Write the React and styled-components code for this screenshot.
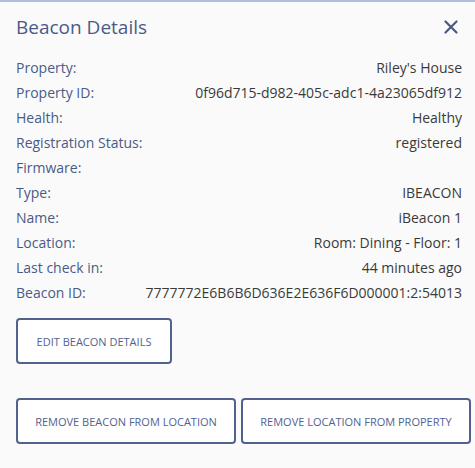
import React from 'react';
import styled, { createGlobalStyle } from 'styled-components';

const GlobalStyle = createGlobalStyle`
  body {
    margin: 0;
    background: #fafafa;
    font-family: "Open Sans", "Liberation Sans", sans-serif;
  }
`;

const Panel = styled.section`
  width: 475px;
  height: 468px;
  box-sizing: border-box;
  border-top: 2px solid #aebde0;
  background: #fafafa;
  padding: 12px 13px 0 16px;
`;

const Header = styled.header`
  display: flex;
  align-items: center;
  justify-content: space-between;
  height: 26px;
  margin-bottom: 15px;
`;

const Title = styled.h2`
  margin: 0;
  font-size: 19px;
  font-weight: 400;
  color: #4a5a86;
`;

const CloseButton = styled.button`
  border: 0;
  background: none;
  padding: 0;
  margin-right: 4px;
  display: flex;
  color: #4a5a86;
  cursor: pointer;
`;

const Details = styled.dl`
  margin: 0;
  display: flex;
  flex-direction: column;
`;

const Row = styled.div`
  display: flex;
  justify-content: space-between;
  align-items: center;
  height: 25px;
  font-size: 14px;
`;

const Label = styled.dt`
  color: #4a5a86;
`;

const Value = styled.dd`
  margin: 0;
  color: #3a3a3a;
  text-align: right;
`;

const Actions = styled.div`
  display: flex;
  flex-direction: column;
  gap: 34px;
  margin-top: 13px;
`;

const ButtonRow = styled.div`
  display: flex;
  gap: 5px;
  margin-right: -9px;
`;

const OutlineButton = styled.button`
  height: 46px;
  width: ${(p) => p.$width}px;
  box-sizing: border-box;
  border: 2px solid #52628f;
  border-radius: 4px;
  background: #fff;
  color: #52628f;
  font-family: inherit;
  font-size: 11px;
  text-transform: uppercase;
  cursor: pointer;
`;

const details = [
  ['Property:', "Riley's House"],
  ['Property ID:', '0f96d715-d982-405c-adc1-4a23065df912'],
  ['Health:', 'Healthy'],
  ['Registration Status:', 'registered'],
  ['Firmware:', ''],
  ['Type:', 'IBEACON'],
  ['Name:', 'iBeacon 1'],
  ['Location:', 'Room: Dining - Floor: 1'],
  ['Last check in:', '44 minutes ago'],
  ['Beacon ID:', '7777772E6B6B6D636E2E636F6D000001:2:54013'],
];

export default function App() {
  return (
    <>
      <GlobalStyle />
      <Panel>
        <Header>
          <Title>Beacon Details</Title>
          <CloseButton aria-label="Close">
            <svg width="14" height="14" viewBox="0 0 14 14" fill="none" stroke="currentColor" strokeWidth="2.2" strokeLinecap="round">
              <path d="M1.5 1.5l11 11M12.5 1.5l-11 11" />
            </svg>
          </CloseButton>
        </Header>
        <Details>
          {details.map(([label, value]) => (
            <Row key={label}>
              <Label>{label}</Label>
              <Value>{value}</Value>
            </Row>
          ))}
        </Details>
        <Actions>
          <OutlineButton $width={156}>Edit beacon details</OutlineButton>
          <ButtonRow>
            <OutlineButton $width={221}>Remove beacon from location</OutlineButton>
            <OutlineButton $width={231}>Remove location from property</OutlineButton>
          </ButtonRow>
        </Actions>
      </Panel>
    </>
  );
}
